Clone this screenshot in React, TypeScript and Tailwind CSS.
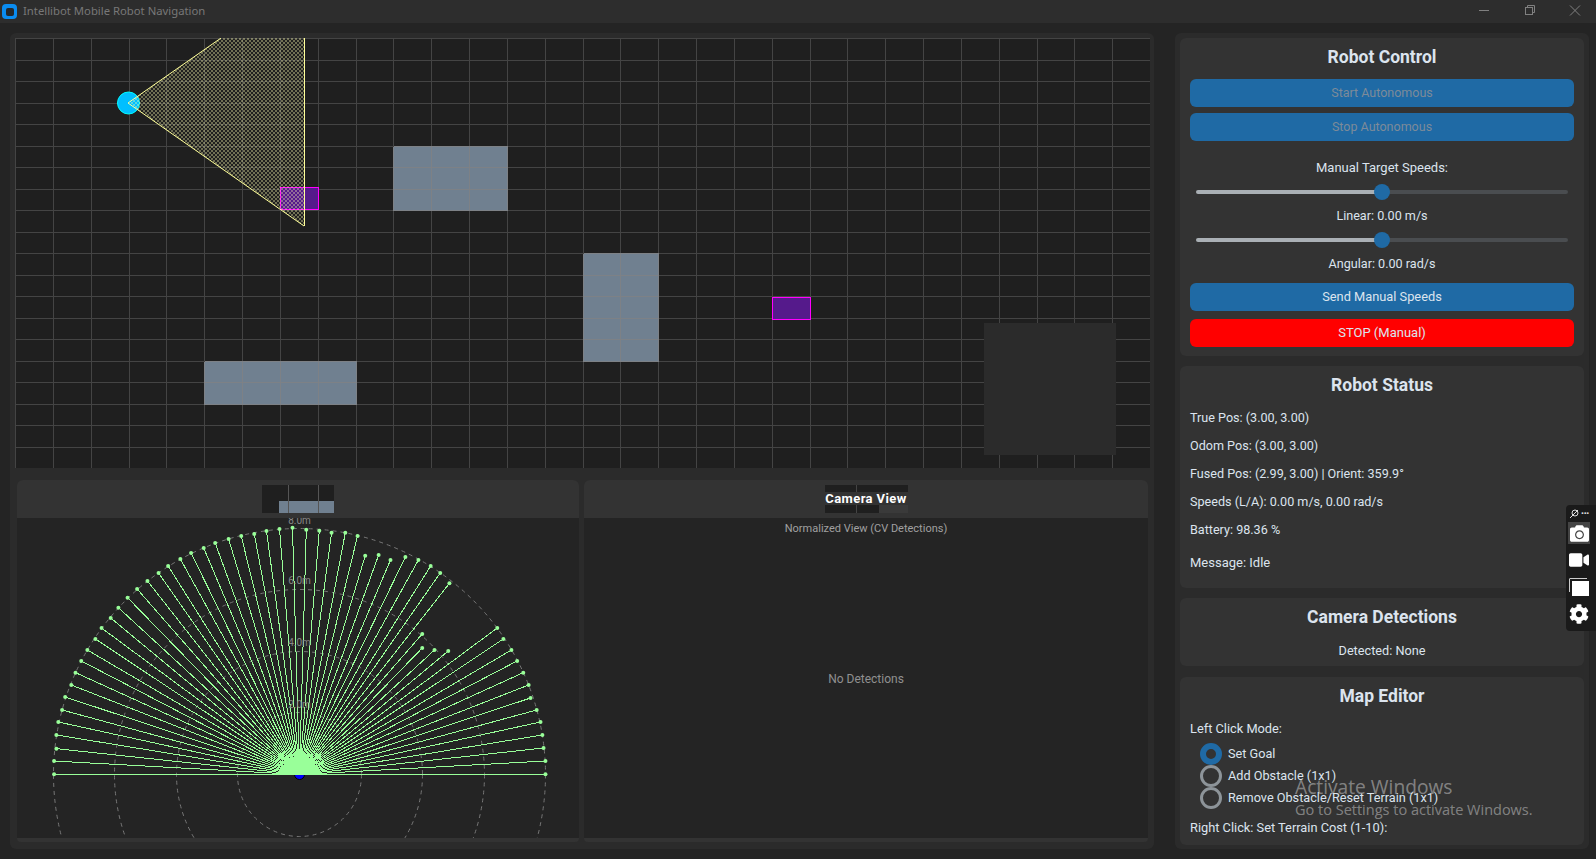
import { FaCamera, FaCog, FaVideo } from 'react-icons/fa';

const W = 1135;
const H = 430;
const CX = W / 30;
const CY = H / 20;

// end points of the lidar rays, read off a 2.613x / 3x crop of the panel
const rayEnds: [number, number][] = [
  [140, 913], [140, 873], [146, 836], [146, 795], [151, 756], [161, 720], [169, 681], [185, 645],
  [196, 608], [211, 573], [227, 540], [248, 507], [264, 474], [288, 444], [308, 413], [332, 383],
  [357, 357], [384, 333], [413, 309], [438, 288], [470, 267], [498, 249], [531, 234], [561, 219],
  [596, 207], [629, 198], [663, 192], [695, 183], [729, 177], [763, 173], [799, 179], [833, 182],
  [865, 188], [901, 188], [933, 198], [953, 257], [988, 255], [1019, 270], [1058, 261], [1092, 270],
  [1124, 288], [1149, 309], [1173, 340], [1102, 492], [1102, 534], [1134, 540], [1170, 543], [1298, 474],
  [1314, 507], [1335, 540], [1350, 573], [1366, 608], [1380, 645], [1385, 684], [1401, 720], [1411, 756],
  [1416, 795], [1419, 834], [1424, 873], [1424, 913],
];

const obstacles = [
  { x: 10, y: 5, w: 3, h: 3 },
  { x: 15, y: 10, w: 2, h: 5 },
  { x: 5, y: 15, w: 4, h: 2 },
];

const px = (i: number) => Math.round(i * CX) + 0.5;
const py = (i: number) => Math.round(i * CY) + 0.5;

function MapCanvas() {
  const vLines = Array.from({ length: 31 }, (_, i) => px(i));
  const hLines = Array.from({ length: 21 }, (_, i) => py(i));
  return (
    <svg width={W} height={H} className="block bg-[#1f1f1f]" shapeRendering="crispEdges">
      <defs>
        <pattern id="stip" width="4" height="4" patternUnits="userSpaceOnUse">
          <circle cx="1" cy="1" r="0.7" fill="#ffffb0" shapeRendering="auto" />
          <circle cx="3" cy="3" r="0.7" fill="#ffffb0" shapeRendering="auto" />
        </pattern>
        <clipPath id="mapClip">
          <rect width={W} height={H} />
        </clipPath>
      </defs>
      {vLines.map((x) => (
        <line key={x} x1={x} x2={x} y1={0} y2={H} stroke="#444444" />
      ))}
      {hLines.map((y) => (
        <line key={y} x1={0} x2={W} y1={y} y2={y} stroke="#444444" />
      ))}
      {obstacles.map((o) => {
        const left = px(o.x);
        const right = px(o.x + o.w);
        const top = py(o.y);
        const bottom = py(o.y + o.h);
        return (
          <g key={o.x}>
            <rect x={left} y={top} width={right - left} height={bottom - top} fill="#708090" />
            {Array.from({ length: o.w + 1 }, (_, i) => (
              <line key={i} x1={px(o.x + i)} x2={px(o.x + i)} y1={top} y2={bottom} stroke="#7d8186" />
            ))}
            {Array.from({ length: o.h + 1 }, (_, i) => (
              <line key={i} x1={left} x2={right} y1={py(o.y + i)} y2={py(o.y + i)} stroke="#7d8186" />
            ))}
          </g>
        );
      })}
      <rect x={969} y={285} width={132} height={132} fill="#2b2b2b" />
      <rect x={265.5} y={149.5} width={38} height={22} fill="#551a8b" stroke="#ff00ff" />
      <rect x={757.5} y={259.5} width={38} height={22} fill="#551a8b" stroke="#ff00ff" />
      <circle cx={113.5} cy={65} r={11} fill="#00bfff" stroke="#00ffff" shapeRendering="auto" />
      <g clipPath="url(#mapClip)">
        <polygon points="113,65 206,0 289,0 289,188" fill="url(#stip)" />
        <line x1={113} y1={65} x2={206} y2={0} stroke="#ffff99" shapeRendering="auto" />
        <line x1={113} y1={65} x2={289} y2={188} stroke="#ffff99" shapeRendering="auto" />
        <line x1={289.5} y1={0} x2={289.5} y2={188} stroke="#ffff99" />
      </g>
    </svg>
  );
}

function LidarCanvas() {
  const ox = 282.5;
  const oy = 256.5;
  const rings: [number, string, number][] = [
    [62, '2.0m', 186],
    [123, '4.0m', 124],
    [185, '6.0m', 62],
    [246, '8.0m', 2],
  ];
  const ends = rayEnds.map(([zx, zy]) => [zx / 2.613 + 0.5 - 17, 470 + zy / 3 - 518]);
  return (
    <svg width={562} height={320} className="block bg-[#242424]">
      {rings.map(([r]) => (
        <circle key={r} cx={ox} cy={oy} r={r} fill="none" stroke="#777777" strokeDasharray="4 4" />
      ))}
      <circle cx={ox} cy={oy} r={5} fill="#0000ff" stroke="#000000" />
      <g shapeRendering="crispEdges">
        {ends.map(([x, y], i) => (
          <line key={i} x1={ox} y1={oy} x2={x} y2={y} stroke="#99ff99" />
        ))}
        <polygon points="263,257 283,230 303,257" fill="#99ff99" />
      </g>
      {ends.map(([x, y], i) => (
        <circle key={i} cx={x} cy={y} r={2} fill="#99ff99" />
      ))}
      {rings.map(([r, label, y]) => (
        <text key={r} x={ox} y={y + 4} textAnchor="middle" fontSize={10} fontFamily="Roboto, sans-serif" fill="#888888">
          {label}
        </text>
      ))}
    </svg>
  );
}

function SliderRow() {
  return (
    <div className="relative mx-1.5 flex h-4 items-center">
      <div className="h-1 w-1/2 rounded-l-sm bg-[#aab0b5]" />
      <div className="h-1 w-1/2 rounded-r-sm bg-[#4a4d50]" />
      <div className="absolute left-1/2 top-0 -ml-2 size-4 rounded-full bg-[#1f6aa5]" />
    </div>
  );
}

function Card({ title, className, children }: { title: string; className: string; children: React.ReactNode }) {
  return (
    <div className={`rounded-md bg-[#333333] px-2.5 ${className}`}>
      <h2 className="flex h-[38px] items-center justify-center text-[17.5px] font-bold text-[#dce4ee]">{title}</h2>
      {children}
    </div>
  );
}

function Radio({ label, on }: { label: string; on?: boolean }) {
  return (
    <div className="flex h-[22px] items-center pl-2.5">
      <span className={`size-[22px] shrink-0 rounded-full ${on ? 'border-[6px] border-[#1f6aa5]' : 'border-[3px] border-[#8d9499]'}`} />
      <span className="ml-1.5 text-[12.7px]">{label}</span>
    </div>
  );
}

export default function App() {
  const status = [
    'True Pos: (3.00, 3.00)',
    'Odom Pos: (3.00, 3.00)',
    'Fused Pos: (2.99, 3.00) | Orient: 359.9°',
    'Speeds (L/A): 0.00 m/s, 0.00 rad/s',
    'Battery: 98.36 %',
  ];

  return (
    <div className="relative h-[859px] w-[1596px] overflow-hidden bg-[#242424] font-['Roboto',sans-serif] text-[13px] text-[#dce4ee]">
      {/* title bar */}
      <div className="flex h-[23px] items-center bg-[#2d2d2d] pl-0.5 text-[#787878]">
        <div className="flex size-[15px] items-center justify-center rounded-[4px] bg-[#0a8cf0]">
          <div className="size-[8px] rounded-[2px] bg-[#24282c]" />
        </div>
        <span className="ml-[6px] font-['Noto_Sans',sans-serif] text-[11.3px]">Intellibot Mobile Robot Navigation</span>
        <div className="ml-auto flex items-center">
          <svg width="46" height="23" viewBox="0 0 46 23">
            <line x1="18" x2="28" y1="10.5" y2="10.5" stroke="#808080" />
          </svg>
          <svg width="46" height="23" viewBox="0 0 46 23">
            <rect x="18.5" y="7.5" width="7" height="7" fill="none" stroke="#808080" />
            <path d="M20.5 7.5V5.5H27.5V12.5H25.5" fill="none" stroke="#808080" />
          </svg>
          <svg width="43" height="23" viewBox="0 0 43 23">
            <path d="M17 5.5L27 15.5M27 5.5L17 15.5" stroke="#808080" />
          </svg>
        </div>
      </div>

      <div className="flex pl-2.5 pt-2.5">
        {/* left column */}
        <div className="h-[816px] w-[1144px] rounded-md bg-[#2b2b2b] pl-[5px] pt-[5px]">
          <MapCanvas />
          <div className="mt-3 flex gap-[5px] pl-0.5">
            <div className="w-[562px]">
              <div className="flex h-[38px] justify-center rounded-t-md bg-[#333333] pt-[5px]">
                <div className="relative h-7 w-[72px] bg-[#1f1f1f]">
                  <div className="absolute bottom-0 right-0 h-3 w-[55px] bg-[#708090]" />
                  <div className="absolute inset-y-0 left-[26px] w-px bg-[#555555]" />
                  <div className="absolute inset-y-0 left-[56px] w-px bg-[#555555]" />
                </div>
              </div>
              <LidarCanvas />
              <div className="h-1 rounded-b-md bg-[#333333]" />
            </div>
            <div className="w-[564px]">
              <div className="flex h-[38px] justify-center rounded-t-md bg-[#333333] pt-[5px]">
                <div className="relative h-7 w-[83px] bg-[#1f1f1f]">
                  <div className="absolute bottom-0 right-0 h-2 w-[29px] bg-[#3a3a3a]" />
                  <div className="absolute inset-y-0 left-[31px] w-px bg-[#444444]" />
                  <div className="absolute left-0 right-0 top-[7px] flex h-[13px] items-center justify-center bg-[#333333] text-[13px] font-bold leading-none tracking-[0.4px] text-white">
                    Camera View
                  </div>
                </div>
              </div>
              <div className="flex h-[320px] flex-col items-center bg-[#242424] text-[11px] text-[#a0a0a0]">
                <div className="mt-[3px] leading-4">Normalized View (CV Detections)</div>
                <div className="mt-[134px] text-xs leading-4 text-[#909090]">No Detections</div>
              </div>
              <div className="h-1 rounded-b-md bg-[#333333]" />
            </div>
          </div>
        </div>

        {/* right column */}
        <div className="ml-[21px] flex h-[816px] w-[414px] flex-col gap-2.5 rounded-md bg-[#2b2b2b] px-[5px] pt-[5px]">
          <Card title="Robot Control" className="h-[318px]">
            <div className="mt-[3px] flex flex-col gap-1.5 text-[12.5px] text-[#7d8b99]">
              <div className="flex h-7 items-center justify-center rounded-md bg-[#1f6aa5]">Start Autonomous</div>
              <div className="flex h-7 items-center justify-center rounded-md bg-[#1f6aa5]">Stop Autonomous</div>
            </div>
            <div className="mt-[19px] text-center leading-4">Manual Target Speeds:</div>
            <div className="mt-2">
              <SliderRow />
            </div>
            <div className="mt-2 text-center text-[12.6px] leading-4">Linear: 0.00 m/s</div>
            <div className="mt-2">
              <SliderRow />
            </div>
            <div className="mt-2 text-center text-[12.6px] leading-4">Angular: 0.00 rad/s</div>
            <div className="mt-[11px] flex h-7 items-center justify-center rounded-md bg-[#1f6aa5] text-[12.8px]">Send Manual Speeds</div>
            <div className="mt-2 flex h-7 items-center justify-center rounded-md bg-[#ff0000]">STOP (Manual)</div>
          </Card>

          <Card title="Robot Status" className="h-[222px]">
            <div className="mt-1.5 flex flex-col gap-3 text-[12.6px]">
              {status.map((s) => (
                <div key={s} className="h-4 leading-4">
                  {s}
                </div>
              ))}
              <div className="mt-[5px] h-4 text-[13px] leading-4">Message: Idle</div>
            </div>
          </Card>

          <Card title="Camera Detections" className="h-[68px]">
            <div className="mt-[7px] text-center text-[12.7px] leading-4">Detected: None</div>
          </Card>

          <Card title="Map Editor" className="mt-px h-[168px]">
            <div className="mt-[6px] text-[12.8px] leading-4">Left Click Mode:</div>
            <div className="mt-[6px]">
              <Radio label="Set Goal" on />
              <Radio label="Add Obstacle (1x1)" />
              <Radio label="Remove Obstacle/Reset Terrain (1x1)" />
            </div>
            <div className="mt-[11px] text-[12.8px] leading-4">Right Click: Set Terrain Cost (1-10):</div>
          </Card>
        </div>
      </div>

      {/* activation watermark */}
      <div className="pointer-events-none absolute left-[1295px] top-[775px] font-['Open_Sans',sans-serif] text-[#ffffff66]">
        <div className="text-[19.2px] leading-6">Activate Windows</div>
        <div className="text-[14.5px] leading-[21px]">Go to Settings to activate Windows.</div>
      </div>

      {/* capture tool overlay */}
      <div className="absolute right-0 top-[505px] flex h-[126px] w-[30px] flex-col items-center rounded-l bg-[#1a1a1a] pr-1 text-white">
        <div className="flex h-[17px] items-center gap-0.5 text-[#dddddd]">
          <svg width="10" height="10" viewBox="0 0 10 10" fill="none" stroke="currentColor">
            <circle cx="6" cy="4" r="3" />
            <path d="M1 9L9 1" />
          </svg>
          <span className="text-[8px] font-bold leading-none tracking-tight">•••</span>
        </div>
        <div className="flex h-[22px] w-[22px] items-center justify-center bg-[#444444]">
          <FaCamera size={19} />
        </div>
        <div className="mt-[5px] flex h-[22px] items-center">
          <FaVideo size={20} />
        </div>
        <div className="mt-[5px] flex h-[22px] items-center">
          <svg width="20" height="18" viewBox="0 0 20 18">
            <path d="M0.5 14V1C0.5 0.7 0.7 0.5 1 0.5H18" fill="none" stroke="#cccccc" />
            <rect x="3" y="3" width="17" height="15" fill="#ffffff" />
          </svg>
        </div>
        <div className="mt-[5px] flex h-[22px] items-center">
          <FaCog size={20} />
        </div>
      </div>
    </div>
  );
}
